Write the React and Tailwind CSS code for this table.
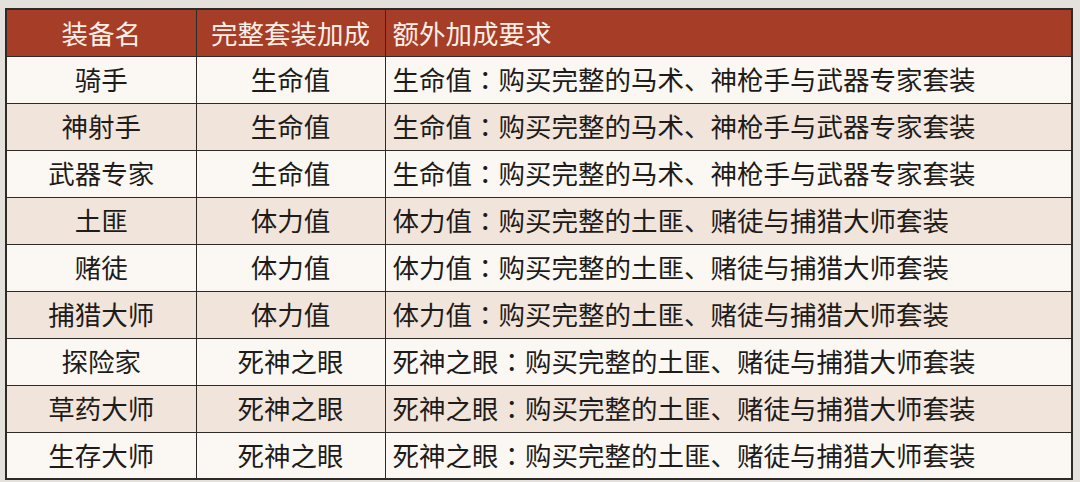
const rows = [
  ["骑手", "生命值", "生命值", "购买完整的马术、神枪手与武器专家套装"],
  ["神射手", "生命值", "生命值", "购买完整的马术、神枪手与武器专家套装"],
  ["武器专家", "生命值", "生命值", "购买完整的马术、神枪手与武器专家套装"],
  ["土匪", "体力值", "体力值", "购买完整的土匪、赌徒与捕猎大师套装"],
  ["赌徒", "体力值", "体力值", "购买完整的土匪、赌徒与捕猎大师套装"],
  ["捕猎大师", "体力值", "体力值", "购买完整的土匪、赌徒与捕猎大师套装"],
  ["探险家", "死神之眼", "死神之眼", "购买完整的土匪、赌徒与捕猎大师套装"],
  ["草药大师", "死神之眼", "死神之眼", "购买完整的土匪、赌徒与捕猎大师套装"],
  ["生存大师", "死神之眼", "死神之眼", "购买完整的土匪、赌徒与捕猎大师套装"],
];

const App = () => {
  return (
    <div
      className="w-[1080px] h-[482px] bg-[#e4e1dc] pt-[8px] pl-[5px]"
      style={{ fontFamily: '"Noto Sans CJK SC", "Noto Sans", sans-serif' }}
    >
      <table className="w-[1068px] border-collapse border-2 border-[#2e2a28] text-[26.5px] leading-none">
        <colgroup>
          <col className="w-[190px]" />
          <col className="w-[189px]" />
          <col />
        </colgroup>
        <thead>
          <tr className="h-[47px] bg-[#a63d27] text-[#fbeee6]">
            <th className="border border-[#2e2a28] font-normal text-center">装备名</th>
            <th className="border border-[#2e2a28] font-normal text-center">完整套装加成</th>
            <th className="border border-[#2e2a28] font-normal text-left pl-[7px]">额外加成要求</th>
          </tr>
        </thead>
        <tbody className="text-[#1e1c1b]">
          {rows.map((r, i) => (
            <tr key={i} className={`h-[47px] ${i % 2 === 0 ? "bg-[#fbf8f4]" : "bg-[#f1e4da]"}`}>
              <td className="border border-[#2e2a28] text-center">{r[0]}</td>
              <td className="border border-[#2e2a28] text-center">{r[1]}</td>
              <td className="border border-[#2e2a28] text-left pl-[7px]">
                {r[2]}
                <span style={{ fontFamily: '"Noto Sans CJK TC", sans-serif' }}>：</span>
                {r[3]}
              </td>
            </tr>
          ))}
        </tbody>
      </table>
    </div>
  );
};

export default App;
